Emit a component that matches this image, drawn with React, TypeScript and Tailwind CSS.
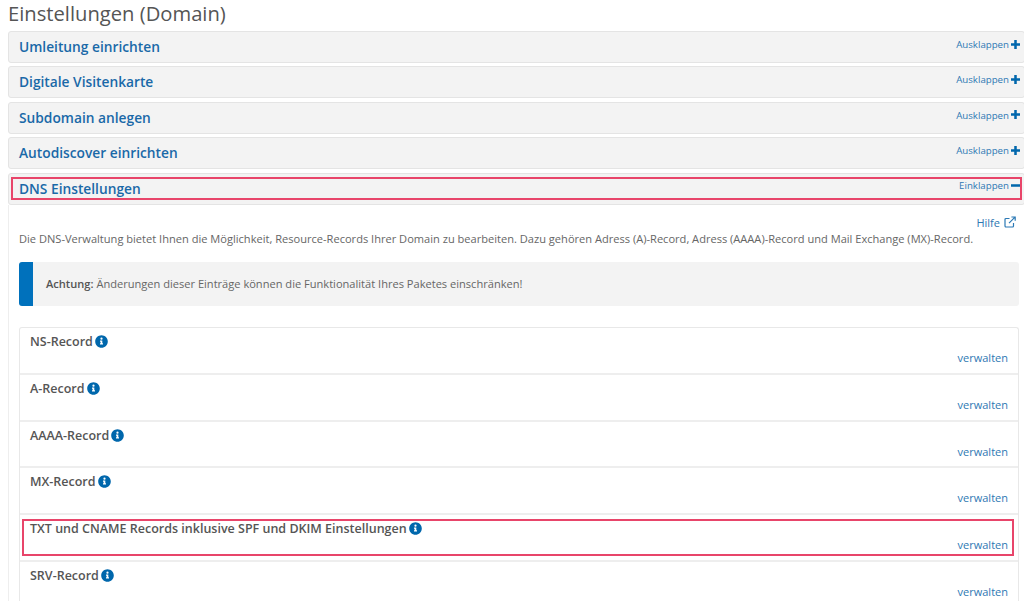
import React from "react";

const font = { fontFamily: '"Open Sans", sans-serif' };

function Info() {
  return (
    <svg viewBox="0 0 512 512" className="inline-block w-[13px] h-[13px] ml-[2px] align-[-2px]" fill="#0067ac">
      <path d="M256 8C119 8 8 119 8 256s111 248 248 248 248-111 248-248S393 8 256 8zm0 92a44 44 0 1 1 0 88 44 44 0 0 1 0-88zm60 266c0 7-5 12-12 12h-96c-7 0-12-5-12-12v-26c0-7 5-12 12-12h14v-62h-14c-7 0-12-5-12-12v-26c0-7 5-12 12-12h68c7 0 12 5 12 12v100h16c7 0 12 5 12 12v26z" />
    </svg>
  );
}

function Plus() {
  return (
    <svg viewBox="0 0 10 10" className="w-[9px] h-[9px] ml-[2px] mt-[-2px]" fill="#0067ac">
      <path d="M3.6 0h2.8v3.6H10v2.8H6.4V10H3.6V6.4H0V3.6h3.6z" />
    </svg>
  );
}

function Minus() {
  return (
    <svg viewBox="0 0 10 10" className="w-[9px] h-[9px] ml-[2px] mt-[-2px]" fill="#0067ac">
      <path d="M0 3.6h10v2.8H0z" />
    </svg>
  );
}

function External() {
  return (
    <svg viewBox="0 0 12 12" className="inline-block w-[12px] h-[12px] ml-[4px] align-[-1px]" fill="none" stroke="#2b79b5" strokeWidth="1.2">
      <path d="M9.5 7v3a1 1 0 0 1-1 1H2a1 1 0 0 1-1-1V3.5a1 1 0 0 1 1-1h3.5" />
      <path d="M5 7.2 11 1.2M7.4 1h3.8v3.8" />
    </svg>
  );
}

function Head({ title, open }: { title: string; open?: boolean }) {
  return (
    <div className={`h-[32px] bg-[#f3f3f3] border border-[#e4e4e4] rounded-[3px] pl-[10px] pr-[4px] flex justify-between ${open ? "mb-0" : "mb-[3.4px]"}`}>
      <span className="text-[13.75px] font-semibold text-[#1a69a8] leading-[30px]">{title}</span>
      <span className="flex items-center h-[26px] text-[9.7px] text-[#2e78b3]">
        {open ? "Einklappen" : "Ausklappen"}
        {open ? <Minus /> : <Plus />}
      </span>
    </div>
  );
}

function Row({ title }: { title: string }) {
  return (
    <div className="h-[46.8px] border-b-2 border-[#eeeeee] px-[10px] pt-[5px] flex flex-col">
      <div className="text-[12.5px] font-semibold text-[#555555] leading-[18px]">
        {title}
        <Info />
      </div>
      <div className="text-right text-[11px] text-[#2e78b3] leading-[16px] mt-[-1px]">verwalten</div>
    </div>
  );
}

export default function App() {
  return (
    <div className="w-[1024px] h-[601px] overflow-hidden bg-white relative" style={font}>
      <h1 className="pl-[8px] text-[20.2px] font-normal text-[#555555] leading-[26px]">Einstellungen (Domain)</h1>
      <div className="ml-[8px] w-[1017px] mt-[5px]">
        <Head title="Umleitung einrichten" />
        <Head title="Digitale Visitenkarte" />
        <Head title="Subdomain anlegen" />
        <Head title="Autodiscover einrichten" />
        <Head title="DNS Einstellungen" open />
        <div className="border-l border-[#eeeeee] pl-[10px] h-[400px]">
          <div className="w-[1000px] pt-[9.5px]">
            <div className="text-right pr-[3px] text-[11px] text-[#2e78b3] leading-[16px] mt-[1px]">
              Hilfe
              <External />
            </div>
            <p className="text-[11.08px] text-[#666666] leading-[16px] whitespace-nowrap">
              Die DNS-Verwaltung bietet Ihnen die Möglichkeit, Resource-Records Ihrer Domain zu bearbeiten. Dazu gehören Adress (A)-Record, Adress (AAAA)-Record und Mail Exchange (MX)-Record.
            </p>
            <div className="mt-[15px] h-[44px] bg-[#f3f3f3] rounded-[3px] border-l-[14px] border-[#0071bc] pl-[13px] flex items-center text-[11.08px] text-[#666666]">
              <span><b className="font-semibold text-[#555555]">Achtung:</b> Änderungen dieser Einträge können die Funktionalität Ihres Paketes einschränken!</span>
            </div>
            <div className="mt-[21px] border border-b-0 border-[#e8e8e8] rounded-t-[3px]">
              <Row title="NS-Record" />
              <Row title="A-Record" />
              <Row title="AAAA-Record" />
              <Row title="MX-Record" />
              <Row title="TXT und CNAME Records inklusive SPF und DKIM Einstellungen" />
              <Row title="SRV-Record" />
            </div>
          </div>
        </div>
      </div>
      <div className="absolute left-[11px] top-[177px] w-[1011px] h-[23px] border-2 border-[#e8456a] pointer-events-none" />
      <div className="absolute left-[22px] top-[519px] w-[992px] h-[37px] border-2 border-[#e8456a] pointer-events-none" />
    </div>
  );
}
